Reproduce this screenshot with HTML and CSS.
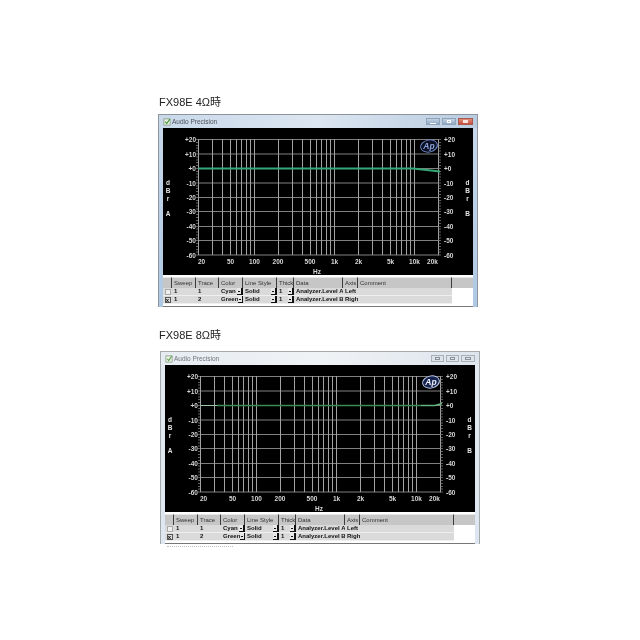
FILE: index.html
```html
<!DOCTYPE html>
<html lang="zh">
<head>
<meta charset="utf-8">
<title>FX98E</title>
<link rel="stylesheet" href="styles.css">
</head>
<body>
<main class="page">
  <h2 class="heading first">FX98E 4Ω時</h2>
  <section class="window active">
    <header class="titlebar">
      <svg class="appicon" viewBox="0 0 9 9"><rect x="1" y="1" width="7" height="7" fill="#e8efe4" stroke="#7b8f76" stroke-width=".8"/><path d="M2.5 4.2 4.2 6.2 7.6 1.2" fill="none" stroke="#4d9a3e" stroke-width="1.3"/></svg>
      <span class="apptitle">Audio Precision</span>
      <span class="buttons"><i class="btn min"></i><i class="btn max"></i><i class="btn close"></i></span>
    </header>
    <svg class="chart" viewBox="0 0 310 147">
      <defs>
        <path id="vgrid" d="M35.5 11V127M49.5 11V127M59.5 11V127M67.5 11V127M73.5 11V127M78.5 11V127M83.5 11V127M87.5 11V127M91.5 11V127M115.5 11V127M129.5 11V127M139.5 11V127M147.5 11V127M153.5 11V127M158.5 11V127M163.5 11V127M167.5 11V127M171.5 11V127M195.5 11V127M209.5 11V127M219.5 11V127M227.5 11V127M233.5 11V127M238.5 11V127M243.5 11V127M247.5 11V127M251.5 11V127M275.5 11V127"/>
        <path id="hgrid" d="M35 11.5H276M35 26H276M35 40.5H276M35 55H276M35 69.5H276M35 83.5H276M35 98.5H276M35 112.5H276M35 127H276"/>
        <path id="ticks" d="M33 11.5H35M33 14.5H35M33 17.5H35M33 20H35M33 23H35M33 26H35M33 29H35M33 32H35M33 34.5H35M33 37.5H35M33 40.5H35M33 43.5H35M33 46H35M33 49H35M33 52H35M33 55H35M33 58H35M33 60.5H35M33 63.5H35M33 66.5H35M33 69.5H35M33 72.5H35M33 75H35M33 78H35M33 81H35M33 83.5H35M33 86.5H35M33 89.5H35M33 92.5H35M33 95.5H35M33 98.5H35M33 101H35M33 104H35M33 107H35M33 110H35M33 112.5H35M33 115.5H35M33 118.5H35M33 121.5H35M33 124H35M33 127H35M275 11.5H278M275 14.5H278M275 17.5H278M275 20H278M275 23H278M275 26H278M275 29H278M275 32H278M275 34.5H278M275 37.5H278M275 40.5H278M275 43.5H278M275 46H278M275 49H278M275 52H278M275 55H278M275 58H278M275 60.5H278M275 63.5H278M275 66.5H278M275 69.5H278M275 72.5H278M275 75H278M275 78H278M275 81H278M275 83.5H278M275 86.5H278M275 89.5H278M275 92.5H278M275 95.5H278M275 98.5H278M275 101H278M275 104H278M275 107H278M275 110H278M275 112.5H278M275 115.5H278M275 118.5H278M275 121.5H278M275 124H278M275 127H278"/>
      </defs>
      <use href="#hgrid" class="hline"/>
      <use href="#vgrid" class="vline"/>
      <use href="#ticks" class="tick"/>
      <path class="curve a" d="M35.5 40.5H250L277 43.5"/>
      <ellipse class="logo-ring" cx="266" cy="18" rx="8.5" ry="6" transform="rotate(-12 266 18)"/>
      <text class="logo-text" x="266" y="21" text-anchor="middle">Ap</text>
      <g class="ylab" text-anchor="end">
        <text x="33" y="14">+20</text><text x="33" y="28.5">+10</text><text x="33" y="43">+0</text><text x="33" y="57.5">-10</text><text x="33" y="72">-20</text><text x="33" y="86">-30</text><text x="33" y="101">-40</text><text x="33" y="115">-50</text><text x="33" y="129.5">-60</text>
      </g>
      <g class="ylab">
        <text x="281" y="14">+20</text><text x="281" y="28.5">+10</text><text x="281" y="43">+0</text><text x="281" y="57.5">-10</text><text x="281" y="72">-20</text><text x="281" y="86">-30</text><text x="281" y="101">-40</text><text x="281" y="115">-50</text><text x="281" y="129.5">-60</text>
      </g>
      <g class="xlab" text-anchor="middle">
        <text x="38.5" y="135.5">20</text><text x="67.5" y="135.5">50</text><text x="91.5" y="135.5">100</text><text x="115" y="135.5">200</text><text x="147" y="135.5">500</text><text x="171.5" y="135.5">1k</text><text x="195.5" y="135.5">2k</text><text x="227.5" y="135.5">5k</text><text x="251.5" y="135.5">10k</text><text x="269.5" y="135.5">20k</text><text x="154" y="146">Hz</text>
      </g>
      <g class="side" text-anchor="middle">
        <text x="5" y="57">d</text><text x="5" y="65">B</text><text x="5" y="73">r</text><text x="5" y="88">A</text>
        <text x="304.5" y="57">d</text><text x="304.5" y="65">B</text><text x="304.5" y="73">r</text><text x="304.5" y="88">B</text>
      </g>
    </svg>
    <div class="table">
      <div class="row head">
        <span></span><span>Sweep</span><span>Trace</span><span>Color</span><span>Line Style</span><span>Thick</span><span>Data</span><span>Axis</span><span>Comment</span><span class="tail"></span>
      </div>
      <div class="row body">
        <span class="check"><i class="box"></i></span><span>1</span><span>1</span><span class="drop">Cyan<i class="arrow"></i></span><span class="drop">Solid<i class="arrow"></i></span><span class="drop">1<i class="arrow"></i></span><span>Analyzer.Level A</span><span>Left</span><span></span><span class="tail"></span>
      </div>
      <div class="row body">
        <span class="check"><i class="box on">x</i></span><span>1</span><span>2</span><span class="drop">Green<i class="arrow"></i></span><span class="drop">Solid<i class="arrow"></i></span><span class="drop">1<i class="arrow"></i></span><span>Analyzer.Level B</span><span>Righ</span><span></span><span class="tail"></span>
      </div>
    </div>
  </section>

  <h2 class="heading second">FX98E 8Ω時</h2>
  <section class="window inactive">
    <header class="titlebar">
      <svg class="appicon" viewBox="0 0 9 9"><rect x="1" y="1" width="7" height="7" fill="#eef2ea" stroke="#7b8f76" stroke-width=".8"/><path d="M2.5 4.2 4.2 6.2 7.6 1.2" fill="none" stroke="#5ca04c" stroke-width="1.2"/></svg>
      <span class="apptitle">Audio Precision</span>
      <span class="buttons"><i class="btn min"></i><i class="btn max"></i><i class="btn close"></i></span>
    </header>
    <svg class="chart" viewBox="0 0 310 147">
      <use href="#hgrid" class="hline"/>
      <use href="#vgrid" class="vline"/>
      <use href="#ticks" class="tick"/>
      <path class="curve b0" d="M35.5 40.5H52"/>
      <path class="curve b" d="M52 40.5H256"/>
      <path class="curve b1" d="M256 40.5H270L277 38.5"/>
      <ellipse class="logo-ring bright" cx="266" cy="17" rx="8.5" ry="6" transform="rotate(-12 266 17)"/>
      <text class="logo-text bright" x="266" y="20" text-anchor="middle">Ap</text>
      <g class="ylab" text-anchor="end">
        <text x="33" y="14">+20</text><text x="33" y="28.5">+10</text><text x="33" y="43">+0</text><text x="33" y="57.5">-10</text><text x="33" y="72">-20</text><text x="33" y="86">-30</text><text x="33" y="101">-40</text><text x="33" y="115">-50</text><text x="33" y="129.5">-60</text>
      </g>
      <g class="ylab">
        <text x="281" y="14">+20</text><text x="281" y="28.5">+10</text><text x="281" y="43">+0</text><text x="281" y="57.5">-10</text><text x="281" y="72">-20</text><text x="281" y="86">-30</text><text x="281" y="101">-40</text><text x="281" y="115">-50</text><text x="281" y="129.5">-60</text>
      </g>
      <g class="xlab" text-anchor="middle">
        <text x="38.5" y="135.5">20</text><text x="67.5" y="135.5">50</text><text x="91.5" y="135.5">100</text><text x="115" y="135.5">200</text><text x="147" y="135.5">500</text><text x="171.5" y="135.5">1k</text><text x="195.5" y="135.5">2k</text><text x="227.5" y="135.5">5k</text><text x="251.5" y="135.5">10k</text><text x="269.5" y="135.5">20k</text><text x="154" y="146">Hz</text>
      </g>
      <g class="side" text-anchor="middle">
        <text x="5" y="57">d</text><text x="5" y="65">B</text><text x="5" y="73">r</text><text x="5" y="88">A</text>
        <text x="304.5" y="57">d</text><text x="304.5" y="65">B</text><text x="304.5" y="73">r</text><text x="304.5" y="88">B</text>
      </g>
    </svg>
    <div class="table">
      <div class="row head">
        <span></span><span>Sweep</span><span>Trace</span><span>Color</span><span>Line Style</span><span>Thick</span><span>Data</span><span>Axis</span><span>Comment</span><span class="tail"></span>
      </div>
      <div class="row body">
        <span class="check"><i class="box"></i></span><span>1</span><span>1</span><span class="drop">Cyan<i class="arrow"></i></span><span class="drop">Solid<i class="arrow"></i></span><span class="drop">1<i class="arrow"></i></span><span>Analyzer.Level A</span><span>Left</span><span></span><span class="tail"></span>
      </div>
      <div class="row body">
        <span class="check"><i class="box on">x</i></span><span>1</span><span>2</span><span class="drop">Green<i class="arrow"></i></span><span class="drop">Solid<i class="arrow"></i></span><span class="drop">1<i class="arrow"></i></span><span>Analyzer.Level B</span><span>Righ</span><span></span><span class="tail"></span>
      </div>
    </div>
    <div class="remnant"></div>
  </section>
</main>
</body>
</html>
```

FILE: styles.css
```css
* { box-sizing: border-box; }
html, body { margin: 0; background: #fff; }
body { width: 640px; height: 640px; overflow: hidden; font-family: "Liberation Sans", Arial, "Noto Sans CJK JP", sans-serif; }
.page { padding-top: 95px; }

.heading {
  margin: 0 0 0 159px;
  height: 14px;
  font-size: 11px;
  line-height: 14px;
  font-weight: 400;
  color: #222;
  filter: blur(.25px);
}
.heading.second { margin-top: 21px; }
.heading.first { margin-bottom: 5px; }
.heading.second { margin-bottom: 9px; }

.window {
  width: 320px;
  padding: 0 4px 0 4px;
  filter: blur(.35px);
  position: relative;
}
.window.active {
  margin-left: 158px;
  background: linear-gradient(#c9d9ea, #aec8e4);
  border: 1px solid #8d949c;
  border-bottom: 0;
}
.window.inactive {
  margin-left: 160px;
  background: linear-gradient(#e3e9f0, #dce7f1);
  border: 1px solid #a6a9ac;
  border-bottom: 0;
}

.titlebar { height: 13px; display: flex; align-items: center; gap: 1px; }
.active .titlebar { background: linear-gradient(90deg, #c9d9ea, #dce6f1 50%, #b9cce0); margin: 0 -4px; padding: 0 4px; }
.inactive .titlebar { background: linear-gradient(90deg, #e6ecf2, #f0f3f6 50%, #dde4ec); margin: 0 -4px; padding: 0 4px; }
.appicon { width: 8px; height: 8px; flex: none; }
.apptitle { font-size: 6.5px; color: #4a5058; }
.inactive .apptitle { color: #6f757b; }
.buttons { margin-left: auto; display: flex; gap: 2px; align-items: center; }
.btn { display: block; height: 7px; width: 14px; position: relative; border: 1px solid #8ea2b8; background: linear-gradient(#c4d3e4, #8fa9c6); }
.btn.close { width: 15px; background: linear-gradient(#e08a78, #c9503c); border-color: #a9594c; }
.btn.min::after { content: ""; position: absolute; left: 3px; right: 3px; bottom: 0; height: 1px; background: #fff; }
.btn.max::after { content: ""; position: absolute; left: 4px; right: 4px; top: 1px; bottom: 1px; border: 1px solid #fff; }
.btn.close::after { content: ""; position: absolute; left: 4px; right: 4px; top: 1px; bottom: 1px; background: #f7e3de; }
.inactive .btn { background: #dde3e9; border-color: #a9b0b8; width: 13px; height: 7px; }
.inactive .btn.close { width: 14px; margin-right: 0; background: #dde3e9; border-color: #a9b0b8; }
.inactive .btn::after { background: none; border: 1px solid #8b9299; left: 3px; right: 3px; top: 1px; bottom: 1px; height: auto; }

.chart { display: block; width: 310px; height: 147px; background: #000; }
.hline { fill: none; stroke: #808080; stroke-width: 1; }
.vline { fill: none; stroke: #a2a2a2; stroke-width: 1; }
.tick { fill: none; stroke: #8a8a8a; stroke-width: .7; }
.curve { fill: none; stroke-width: 1.8; }
.curve.a { stroke: #35a878; }
.curve.b0 { stroke: #9fc4a8; stroke-width: 1; }
.curve.b { stroke: #3f8a50; stroke-width: 1.5; }
.curve.b1 { stroke: #62b47e; stroke-width: 1.6; }
.logo-ring { fill: #0b0f24; stroke: #6f8ccb; stroke-width: 1; }
.logo-ring.bright { fill: #16224f; stroke: #c5d3f0; }
.logo-text { font-size: 8.5px; font-weight: 700; font-style: italic; fill: #8ea5da; }
.logo-text.bright { fill: #eef2fb; }
.ylab, .xlab, .side { fill: #d6d6d6; font-weight: 700; }
.ylab { font-size: 6.5px; }
.xlab { font-size: 6.5px; }
.side { font-size: 6.5px; fill: #e4e4e4; }

.table { background: #fff; padding: 2px 0; border-bottom: 1px solid #777; margin-bottom: 0; }
.row {
  display: grid;
  grid-template-columns: 9px 24px 23px 24px 34px 17px 49px 15px 94px 21px;
  font-size: 6px;
  color: #111;
  white-space: nowrap;
}
.row > span { padding-left: 2px; overflow: hidden; }
.head { height: 11px; line-height: 10px; color: #333; font-size: 6px; }
.head > span { background: #c6c6c6; border-top: 1px solid #e6e6e6; border-right: 1px solid #3c3c3c; }
.head > span.tail { border-right: 0; }
.body { height: 8px; line-height: 7px; font-weight: 700; }
.body > span { background: #dadada; border-bottom: 1px solid #efefef; }
.body > span.tail { background: #fff; border: 0; }
.check { padding: 0 !important; display: flex; justify-content: center; }
.box { display: block; width: 6px; height: 6px; margin-top: 1px; border: 1px solid #aaa; background: #eee; font-style: normal; font-size: 6px; line-height: 4px; text-align: center; color: #111; }
.box.on { border-color: #555; background: #ddd; }
.drop { display: flex; justify-content: space-between; padding-right: 0; }
.arrow { display: block; width: 6px; height: 8px; flex: none; background: #e8e8e8; border-right: 2px solid #111; border-bottom: 2px solid #111; position: relative; }
.arrow::after { content: ""; position: absolute; left: 1px; top: 3px; width: 2px; height: 1px; background: #111; }

.remnant { position: absolute; left: 6px; top: 194px; width: 66px; height: 1px; border-top: 1px dotted #bbb; }
```
